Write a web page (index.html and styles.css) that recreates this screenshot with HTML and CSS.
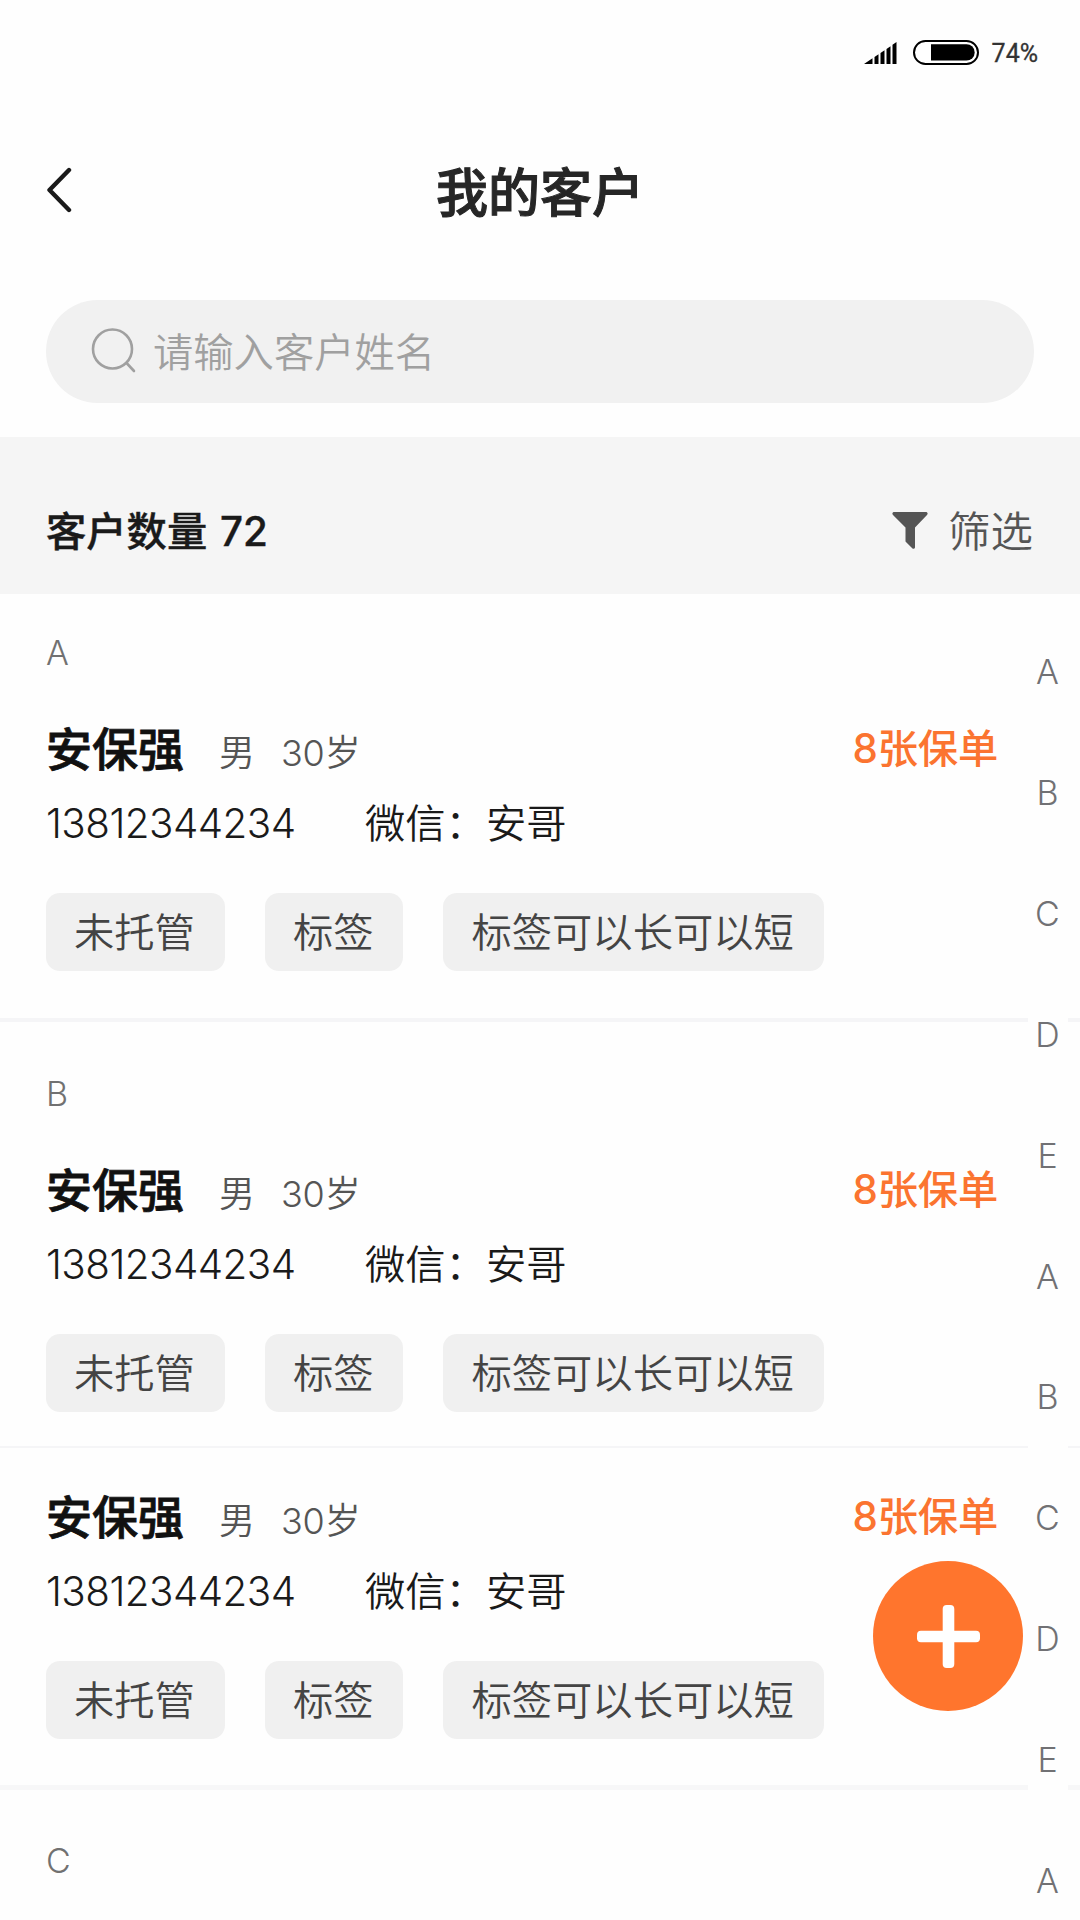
FILE: index.html
```html
<!DOCTYPE html>
<html lang="zh-CN">
<head>
<meta charset="utf-8">
<title>我的客户</title>
<link rel="stylesheet" href="styles.css">
</head>
<body>
<div class="screen">
  <div class="status">
    <svg class="signal" viewBox="0 0 33 22" width="33" height="22">
      <path d="M0 22 8.500 16.300V22ZM10.500 15 14.500 12.300V22H10.500ZM16.500 11 20.500 8.300V22H16.500ZM22.500 7 26.500 4.200V22H22.500ZM28.500 2.800 32.500 0V22H28.500Z"/>
    </svg>
    <svg class="battery" viewBox="0 0 66 25" width="66" height="25">
      <rect x="1" y="1" width="64" height="23" rx="11.500" fill="#fff" stroke="#000" stroke-width="2"/>
      <path d="M18 4.200H53.500A8.200 8.200 0 0 1 53.500 20.600H18Z"/>
    </svg>
    <span class="percent">74%</span>
  </div>

  <header class="header">
    <svg class="back" viewBox="0 0 26 46" width="26" height="46">
      <path d="M23 3 3.500 23 23 43" fill="none" stroke="#1a1a1a" stroke-width="4.400" stroke-linecap="round" stroke-linejoin="round"/>
    </svg>
    <h1 class="title">我的客户</h1>
  </header>

  <div class="search">
    <svg class="search-icon" viewBox="0 0 46 46" width="46" height="46">
      <circle cx="20.500" cy="20" r="19.500"/>
      <path d="M35 34.500 42 42"/>
    </svg>
    <span class="placeholder">请输入客户姓名</span>
  </div>

  <div class="summary">
    <span class="count">客户数量 72</span>
    <span class="filter">
      <svg class="funnel" viewBox="0 0 36 37" width="36" height="37">
        <path d="M1.500 0H34.500Q36.500 1 35 3L23 15.500V35.500Q22.500 37.500 20.500 36.500L13.500 29.500V15.500L1 3Q-.5 1 1.500 0Z"/>
      </svg>
      <span>筛选</span>
    </span>
  </div>

  <main class="list">
    <section class="group">
      <h2 class="letter">A</h2>
      <article class="customer">
        <div class="row">
          <span class="name">安保强</span><span class="sex">男</span><span class="age">30岁</span><span class="policies">8张保单</span>
        </div>
        <div class="contact"><span class="phone">13812344234</span><span>微信：安哥</span></div>
        <div class="tags"><span class="tag">未托管</span><span class="tag">标签</span><span class="tag">标签可以长可以短</span></div>
      </article>
    </section>

    <section class="group">
      <h2 class="letter">B</h2>
      <article class="customer">
        <div class="row">
          <span class="name">安保强</span><span class="sex">男</span><span class="age">30岁</span><span class="policies">8张保单</span>
        </div>
        <div class="contact"><span class="phone">13812344234</span><span>微信：安哥</span></div>
        <div class="tags"><span class="tag">未托管</span><span class="tag">标签</span><span class="tag">标签可以长可以短</span></div>
      </article>
      <article class="customer">
        <div class="row">
          <span class="name">安保强</span><span class="sex">男</span><span class="age">30岁</span><span class="policies">8张保单</span>
        </div>
        <div class="contact"><span class="phone">13812344234</span><span>微信：安哥</span></div>
        <div class="tags"><span class="tag">未托管</span><span class="tag">标签</span><span class="tag">标签可以长可以短</span></div>
      </article>
    </section>

    <section class="group">
      <h2 class="letter">C</h2>
    </section>
  </main>

  <nav class="rail">
    <span>A</span><span>B</span><span>C</span><span>D</span><span>E</span><span>A</span><span>B</span><span>C</span><span>D</span><span>E</span><span>A</span>
  </nav>

  <button class="add" aria-label="添加">
    <svg viewBox="0 0 63 63" width="63" height="63">
      <rect x="0" y="25.700" width="63" height="11.600" rx="4"/>
      <rect x="25.700" y="0" width="11.600" height="63" rx="4"/>
    </svg>
  </button>
</div>
</body>
</html>
```
FILE: styles.css
```css
* { box-sizing: border-box; margin: 0; padding: 0; }

body {
  background: #fff;
  font-family: Inter, "Noto Sans CJK SC", sans-serif;
  font-size: 40.3px;
  color: #1a1a1a;
}

.screen {
  position: relative;
  width: 1080px;
  height: 1920px;
  overflow: hidden;
  background: #fefefe;
}

.status {
  display: flex;
  align-items: center;
  justify-content: flex-end;
  height: 105px;
  padding-right: 42px;
}
.battery { margin: 0 13px 0 16px; }
.percent {
  padding-top: 2px;
  font: 400 25px/30px Roboto, sans-serif;
  color: #333;
  -webkit-text-stroke: 0.3px;
}

.header {
  display: grid;
  grid-template-columns: 100px 1fr 100px;
  align-items: center;
  height: 170px;
  padding: 0 46px;
}
.title {
  padding-top: 7px;
  font-size: 52px;
  font-weight: 500;
  line-height: 70px;
  text-align: center;
  color: #262626;
  -webkit-text-stroke: 1px;
}

.search {
  display: flex;
  align-items: center;
  gap: 15px;
  height: 103px;
  margin: 25px 46px 34px;
  padding-left: 46px;
  border-radius: 52px;
  background: #f1f1f1;
  color: #a0a0a0;
}
.search-icon { overflow: visible; fill: none; stroke: #a0a0a0; stroke-width: 2.6; stroke-linecap: round; }
.placeholder { padding-top: 2px; font-weight: 350; line-height: 60px; }

.summary {
  display: flex;
  align-items: center;
  justify-content: space-between;
  height: 157px;
  padding: 30px 47px 0 46px;
  background: #f5f5f5;
}
.count {
  padding-bottom: 4px;
  font-weight: 500;
  word-spacing: 2px;
  -webkit-text-stroke: 0.4px;
}
.filter {
  display: flex;
  align-items: center;
  gap: 20px;
  font-size: 42.5px;
  font-weight: 350;
  color: #555;
}
.filter span { padding-bottom: 4px; }
.funnel { fill: #555; }

.group { padding-top: 52px; }
.group:first-child { padding-top: 39px; border-bottom: 4px solid #f5f5f7; }
.group:nth-child(2) { border-bottom: 5px solid #f7f7f8; }
.group:last-child { padding-top: 51px; }
.letter {
  height: 40px;
  padding-left: 46px;
  font-size: 34px;
  font-weight: 350;
  line-height: 39px;
  color: #717171;
}

.customer { padding: 46px 46px 47px; }
.customer:not(:last-child) { padding-bottom: 34px; border-bottom: 2px solid #f5f5f7; }
.customer + .customer { padding-top: 39px; padding-bottom: 46px; }

.row { display: flex; align-items: baseline; height: 60px; line-height: 60px; }
.name {
  width: 173px;
  font-size: 46px;
  font-weight: 500;
  color: #111;
  -webkit-text-stroke: 0.8px;
}
.sex { width: 62px; font-size: 36px; font-weight: 350; color: #555; }
.age { font-size: 36px; font-weight: 350; letter-spacing: -0.2px; color: #555; }
.policies {
  align-self: flex-start;
  margin-left: auto;
  padding-right: 36px;
  font-size: 40.3px;
  font-weight: 500;
  letter-spacing: -0.2px;
  color: #fb7430;
}

.contact { display: flex; height: 60px; margin-top: 14px; font-weight: 350; line-height: 62px; }
.phone { width: 319px; letter-spacing: -0.5px; }

.tags { display: flex; gap: 40px; margin-top: 40px; }
.tag {
  height: 78px;
  padding: 0 30px 0 28px;
  border-radius: 14px;
  background: #f0f0f0;
  font-weight: 350;
  line-height: 80px;
  color: #444;
}

/* Alphabet index, laid over the list's right edge */
.rail {
  position: absolute;
  top: 612px;
  left: 1028px;
  display: flex;
  flex-direction: column;
  width: 40px;
  padding-right: 1px;
  background: #fefefe;
  font-size: 34px;
  font-weight: 350;
  line-height: 120.9px;
  text-align: center;
  color: #717174;
}

.add {
  position: absolute;
  top: 1561px;
  left: 873px;
  display: grid;
  place-items: center;
  width: 150px;
  height: 150px;
  border: 0;
  border-radius: 50%;
  background: #ff752d;
}
.add svg { fill: #fff; }
```
